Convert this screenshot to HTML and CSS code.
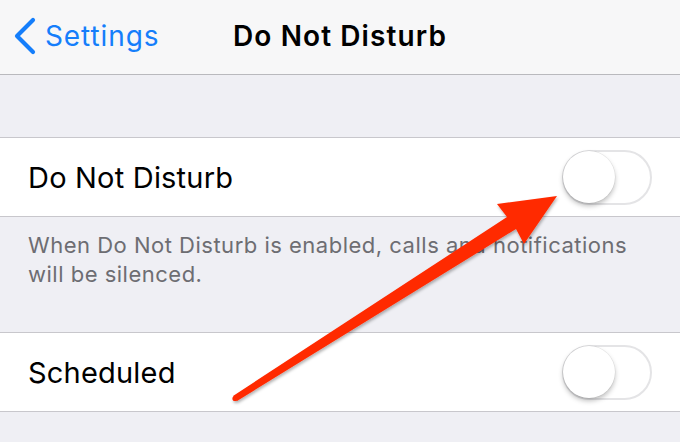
FILE: index.html
```html
<!DOCTYPE html>
<html lang="en">
<head>
    <meta charset="UTF-8">
    <meta name="viewport" content="width=device-width, initial-scale=1.0">
    <title>Do Not Disturb</title>
    <link rel="stylesheet" href="styles.css">
</head>
<body>
    <div class="screen">
        <div class="nav-bar">
            <div class="back-button">
                <svg class="chevron" width="24" height="38" viewBox="0 0 24 38">
                    <polyline points="20,3 4,19 20,35" fill="none" stroke="#157efb" stroke-width="4.2" stroke-linecap="round" stroke-linejoin="round"/>
                </svg>
                <span>Settings</span>
            </div>
            <div class="nav-title">Do Not Disturb</div>
            <div></div>
        </div>

        <div class="group-gap"></div>

        <div class="cell">
            <span class="cell-label">Do Not Disturb</span>
            <div class="switch"><div class="knob"></div></div>
        </div>
        <div class="group-footer">
            When Do Not Disturb is enabled, calls and notifications will be silenced.
        </div>

        <div class="cell">
            <span class="cell-label">Scheduled</span>
            <div class="switch"><div class="knob"></div></div>
        </div>
        <div class="group-bottom"></div>

        <!-- red annotation arrow drawn over the list -->
        <svg class="annotation" viewBox="0 0 680 442" width="680" height="442">
            <defs>
                <filter id="arrowShadow" x="-10%" y="-10%" width="120%" height="120%">
                    <feDropShadow dx="1" dy="2" stdDeviation="1.5" flood-color="#000" flood-opacity="0.3"/>
                </filter>
            </defs>
            <g filter="url(#arrowShadow)" fill="#ff2a06">
                <polygon points="557,196 497,204 507,217 233,396 237,401 516,229 524,244"/>
                <circle cx="235" cy="398.5" r="2.6"/>
            </g>
        </svg>
    </div>
</body>
</html>
```

FILE: styles.css
```css
body {
    margin: 0;
    font-family: Inter, "Noto Sans", sans-serif;
    background-color: #efeff4;
}
.screen {
    position: relative;
    width: 680px;
    height: 442px;
    overflow: hidden;
    background-color: #efeff4;
}
.nav-bar {
    display: grid;
    grid-template-columns: 1fr auto 1fr;
    align-items: center;
    height: 75px;
    padding-bottom: 2px;
    box-sizing: border-box;
    background-color: #f7f7f8;
    border-bottom: 1px solid #b9b9bd;
}
.back-button {
    display: flex;
    align-items: center;
    gap: 8px;
    padding-left: 13px;
    color: #157efb;
    font-size: 28px;
    letter-spacing: 0.9px;
}
.back-button .chevron {
    display: block;
}
.nav-title {
    font-size: 28px;
    font-weight: 600;
    color: #000;
    letter-spacing: 1.1px;
}
.group-gap {
    height: 62px;
    border-bottom: 1px solid #c8c7cc;
}
.cell {
    display: flex;
    align-items: center;
    justify-content: space-between;
    height: 78px;
    padding: 0 28px;
    background-color: #fff;
    border-bottom: 1px solid #c8c7cc;
}
.cell-label {
    font-size: 29px;
    color: #000;
    letter-spacing: 0.2px;
}
.switch {
    position: relative;
    width: 86px;
    height: 51px;
    border: 2.5px solid #e4e4e6;
    border-radius: 30px;
    background-color: #fff;
}
.knob {
    position: absolute;
    left: -1px;
    top: -0.5px;
    width: 52px;
    height: 52px;
    border-radius: 50%;
    background-color: #fff;
    box-shadow: 0 3px 5px rgba(0, 0, 0, 0.25), 0 0 0 0.5px rgba(0, 0, 0, 0.08);
}
.group-footer {
    box-sizing: border-box;
    height: 116px;
    padding: 14px 40px 0 28px;
    font-size: 22px;
    line-height: 29px;
    letter-spacing: 0.5px;
    color: #6d6d72;
    border-bottom: 1px solid #c8c7cc;
}
.group-bottom {
    height: 30px;
}
.annotation {
    position: absolute;
    left: 0;
    top: 0;
    pointer-events: none;
}
```
